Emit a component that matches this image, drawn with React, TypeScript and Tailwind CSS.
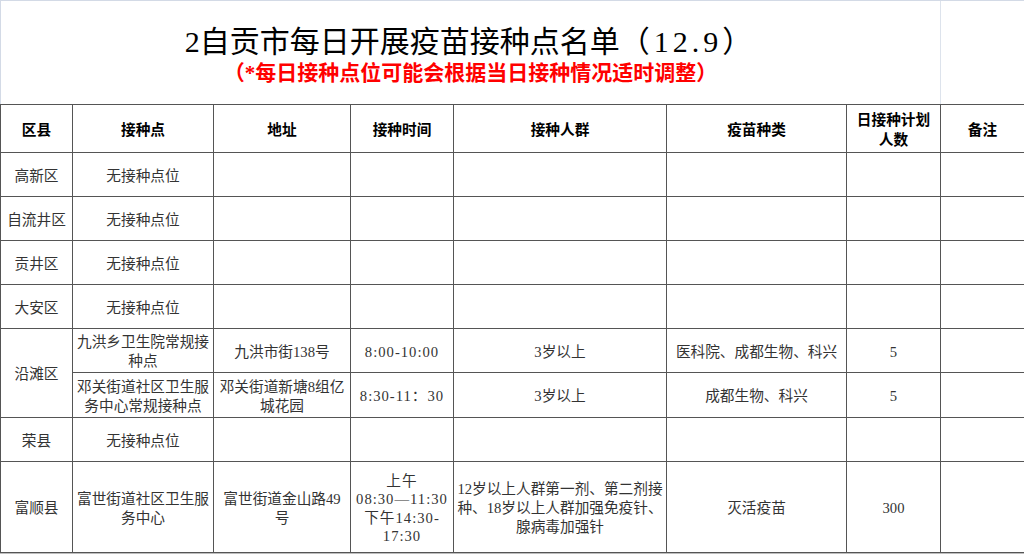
import React from "react";

const FONT = '"Liberation Serif", "Noto Sans CJK SC", serif';

const C = ({ children, cls = "" }: { children?: React.ReactNode; cls?: string }) => (
  <div
    className={
      "flex items-center justify-center text-center border-r border-b border-[#555555] px-[2px] pt-[3px] whitespace-nowrap " +
      cls
    }
  >
    {children}
  </div>
);

const Br = () => <br />;

export default function App() {
  const headers: React.ReactNode[] = [
    "区县",
    "接种点",
    "地址",
    "接种时间",
    "接种人群",
    "疫苗种类",
    <>
      日接种计划
      <Br />
      人数
    </>,
    "备注",
  ];

  const emptyRow = (district: string) => (
    <React.Fragment key={district}>
      <C>{district}</C>
      <C>无接种点位</C>
      <C />
      <C />
      <C />
      <C />
      <C />
      <C />
    </React.Fragment>
  );

  return (
    <div
      className="w-[1024px] h-[554px] overflow-hidden bg-white text-[#333333]"
      style={{ fontFamily: FONT }}
    >
      {/* Title area */}
      <div className="grid grid-cols-[940px_84px] h-[104px] border-t border-l border-[#d3dae6]">
        <div className="flex flex-col items-center border-r border-[#dde3ec] pt-[23px]">
          <div className="text-[30px] leading-[36px] text-black">
            2自贡市每日开展疫苗接种点名单<span className="tracking-[4px]">（12.9）</span>
          </div>
          <div className="text-[21px] leading-[26px] font-bold text-[#ff0000]">
            （*每日接种点位可能会根据当日接种情况适时调整）
          </div>
        </div>
        <div />
      </div>

      {/* Table */}
      <div className="grid grid-cols-[72px_141px_137px_103px_213px_180px_94px_84px] grid-rows-[48px_44px_44px_44px_44px_44px_45px_44px_91px] border-t border-l border-[#555555] text-[14.67px] leading-[19px]">
        {headers.map((h, i) => (
          <C key={i} cls="font-bold text-black leading-[20px]">
            {h}
          </C>
        ))}

        {emptyRow("高新区")}
        {emptyRow("自流井区")}
        {emptyRow("贡井区")}
        {emptyRow("大安区")}

        {/* 沿滩区 */}
        <C cls="row-span-2">沿滩区</C>
        <C>
          九洪乡卫生院常规接
          <Br />
          种点
        </C>
        <C>九洪市街138号</C>
        <C cls="tracking-[1px]">8:00-10:00</C>
        <C>3岁以上</C>
        <C>医科院、成都生物、科兴</C>
        <C>5</C>
        <C />

        <C>
          邓关街道社区卫生服
          <Br />
          务中心常规接种点
        </C>
        <C>
          邓关街道新塘8组亿
          <Br />
          城花园
        </C>
        <C cls="tracking-[1px]">8:30-11：30</C>
        <C>3岁以上</C>
        <C>成都生物、科兴</C>
        <C>5</C>
        <C />

        {emptyRow("荣县")}

        {/* 富顺县 */}
        <C>富顺县</C>
        <C>
          富世街道社区卫生服
          <Br />
          务中心
        </C>
        <C>
          富世街道金山路49
          <Br />
          号
        </C>
        <C cls="tracking-[1px] leading-[18.5px]">
          上午
          <Br />
          08:30—11:30
          <Br />
          下午14:30-
          <Br />
          17:30
        </C>
        <C cls="px-0">
          12岁以上人群第一剂、第二剂接
          <Br />
          种、18岁以上人群加强免疫针、
          <Br />
          腺病毒加强针
        </C>
        <C>灭活疫苗</C>
        <C>300</C>
        <C />
      </div>
      <div className="h-[1px] bg-[#bdbdbd]" />
    </div>
  );
}
